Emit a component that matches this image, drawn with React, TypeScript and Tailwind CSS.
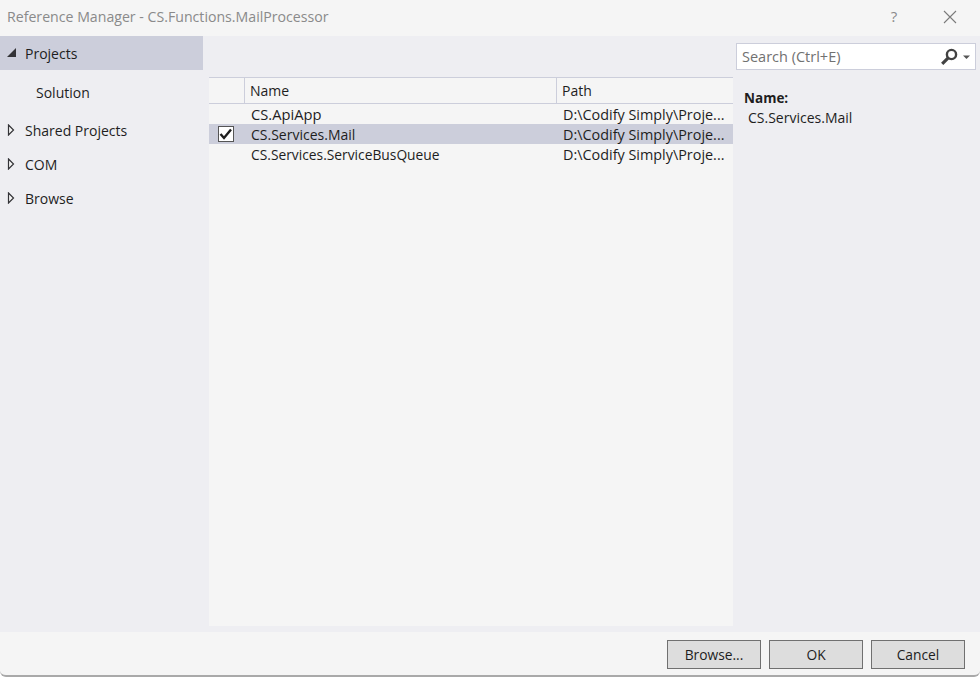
import React from "react";

const font = { fontFamily: '"Open Sans", "Noto Sans", sans-serif' };

function Tri({ open }: { open?: boolean }) {
  return open ? (
    <svg width="10" height="10" viewBox="0 0 10 10" className="shrink-0">
      <path d="M1 9 L10 9 L10 0 Z" fill="#333337" />
    </svg>
  ) : (
    <svg width="10" height="12" viewBox="0 0 10 12" className="shrink-0">
      <path d="M2.5 1 L7.5 6 L2.5 11 Z" fill="#f5f5f5" stroke="#333337" strokeWidth="1.2" />
    </svg>
  );
}

function Tree({ label }: { label: string }) {
  return (
    <div className="flex items-center h-[34px] pl-[6px] gap-[9px]">
      <Tri />
      <span>{label}</span>
    </div>
  );
}

function Row({ name, checked, nameClass }: { name: string; checked?: boolean; nameClass?: string }) {
  return (
    <div className={`flex h-5 items-center ${checked ? "bg-[#ccceDB]" : ""}`}>
      <div className="w-[41px] flex justify-start pl-[9px] shrink-0">
        {checked && (
          <div className="w-4 h-4 border border-[#555] bg-white flex items-center justify-center">
            <svg width="14" height="14" viewBox="0 0 14 14">
              <path d="M1.5 7 L5 11 L12 2.5" fill="none" stroke="#1e1e1e" strokeWidth="2.4" />
            </svg>
          </div>
        )}
      </div>
      <div className={`w-[313px] pl-[1px] shrink-0 truncate ${nameClass ?? ""}`}>{name}</div>
      <div className="text-[14.4px] truncate pt-[1px]">D:\Codify Simply\Proje...</div>
    </div>
  );
}

function Btn({ label }: { label: string }) {
  return (
    <button className="w-[94px] h-[29px] bg-[#dddddd] border border-[#707070] text-[#1e1e1e] text-[13.8px] pt-[2px]">
      {label}
    </button>
  );
}

export default function App() {
  return (
    <div className="w-[980px] h-[677px] bg-white overflow-hidden">
      <div
        style={font}
        className="w-full h-[677px] bg-[#f5f5f5] flex flex-col text-[14px] text-[#1e1e1e] rounded-b-[6px] border-b-2 border-[#a9a9a9]"
      >
        <div className="h-[36px] shrink-0 flex items-center pl-[7px] text-[#8a8a8a] pb-[3px]">
          <span className="flex-1 text-[14.15px]">Reference Manager - CS.Functions.MailProcessor</span>
          <span className="w-[10px] text-center mr-[43px] text-[15px]">?</span>
          <svg width="16" height="16" viewBox="0 0 16 16" className="mr-[22px]">
            <path d="M2 2 L14 14 M14 2 L2 14" stroke="#7a7a7a" strokeWidth="1.1" />
          </svg>
        </div>
        <div className="flex-1 flex bg-[#eeeef2] min-h-0">
          <div className="w-[203px] shrink-0">
            <div className="flex items-center h-[34px] bg-[#ccceDB] pl-[6px] gap-[9px]">
              <Tri open />
              <span>Projects</span>
            </div>
            <div className="h-[43px] flex items-center pl-[36px] pt-[2px]">Solution</div>
            <Tree label="Shared Projects" />
            <Tree label="COM" />
            <Tree label="Browse" />
          </div>
          <div className="w-[530px] shrink-0 pl-[6px] pt-[41px] pb-[6px] flex flex-col">
            <div className="flex-1 bg-[#f5f5f5] flex flex-col">
              <div className="flex h-[27px] shrink-0 items-center border-y border-[#ccceDB]">
                <div className="w-[36px] h-full border-r border-[#ccceDB] shrink-0" />
                <div className="w-[312px] h-full border-r border-[#ccceDB] shrink-0 flex items-center pl-[5px]">Name</div>
                <div className="pl-[5px]">Path</div>
              </div>
              <div>
                <Row name="CS.ApiApp" nameClass="text-[14.7px]" />
                <Row name="CS.Services.Mail" checked />
                <Row name="CS.Services.ServiceBusQueue" nameClass="text-[13.8px] pt-[2px]" />
              </div>
            </div>
          </div>
          <div className="flex-1 pl-[3px] pt-[7px] pr-[4px]">
            <div className="h-[27px] bg-white border border-[#ccceDB] flex items-center pl-[5px] pr-[3px] text-[#717171] text-[14.5px]">
              <span className="flex-1">Search (Ctrl+E)</span>
              <svg width="18" height="18" viewBox="0 0 18 18">
                <circle cx="11.5" cy="6.5" r="4.6" fill="none" stroke="#424242" strokeWidth="2.4" />
                <path d="M8.2 9.8 L2.2 15.8" stroke="#424242" strokeWidth="3.2" />
              </svg>
              <svg width="10" height="10" viewBox="0 0 10 10" className="ml-[4px]">
                <path d="M1 3.5 L8 3.5 L4.5 7 Z" fill="#555" />
              </svg>
            </div>
            <div className="pl-[8px] pt-[18px]">
              <div className="font-bold h-5 leading-5 text-[13.5px]">Name:</div>
              <div className="pl-[4px] h-5 leading-5">CS.Services.Mail</div>
            </div>
          </div>
        </div>
        <div className="h-[43px] shrink-0 flex justify-end items-start pt-[8px] pr-[15px] gap-2">
          <Btn label="Browse..." />
          <Btn label="OK" />
          <Btn label="Cancel" />
        </div>
      </div>
    </div>
  );
}
